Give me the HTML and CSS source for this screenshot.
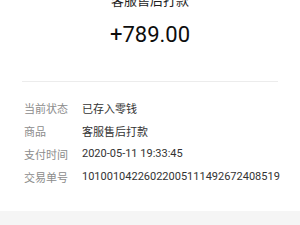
FILE: index.html
```html
<!DOCTYPE html>
<html lang="zh">
<head>
<meta charset="utf-8">
<link rel="stylesheet" href="styles.css">
</head>
<body>
<div class="page">
  <div class="header">
    <div class="title">客服售后打款</div>
    <div class="amount">+789.00</div>
  </div>
  <div class="divider"></div>
  <div class="details">
    <div class="row"><span class="label">当前状态</span><span class="value">已存入零钱</span></div>
    <div class="row"><span class="label">商品</span><span class="value">客服售后打款</span></div>
    <div class="row"><span class="label">支付时间</span><span class="value">2020-05-11 19:33:45</span></div>
    <div class="row"><span class="label">交易单号</span><span class="value">10100104226022005111492672408519</span></div>
  </div>
  <div class="footer"></div>
</div>
</body>
</html>
```
FILE: styles.css
```css
html, body {
  margin: 0;
  padding: 0;
  background: #ffffff;
}
body {
  width: 300px;
  height: 225px;
  overflow: hidden;
  font-family: Roboto, "Noto Sans CJK SC", sans-serif;
}
.page {
  display: flex;
  flex-direction: column;
  height: 225px;
}
.header {
  display: flex;
  flex-direction: column;
  align-items: center;
}
.title {
  font-size: 13px;
  line-height: 13px;
  color: #1e1e1e;
  margin-top: -6px;
}
.amount {
  font-size: 22px;
  line-height: 22px;
  color: #0d0d0d;
  margin-top: 17px;
}
.divider {
  height: 1px;
  background: #ececec;
  margin: 35px 22px 0;
}
.details {
  display: flex;
  flex-direction: column;
  padding: 14px 0 0 24px;
}
.row {
  display: flex;
  height: 23px;
  align-items: center;
  font-size: 11px;
}
.label {
  width: 58px;
  color: #8c8c8c;
}
.value {
  color: #333333;
}
.footer {
  margin-top: 23px;
  flex: 1;
  background: #f5f5f5;
}
```
